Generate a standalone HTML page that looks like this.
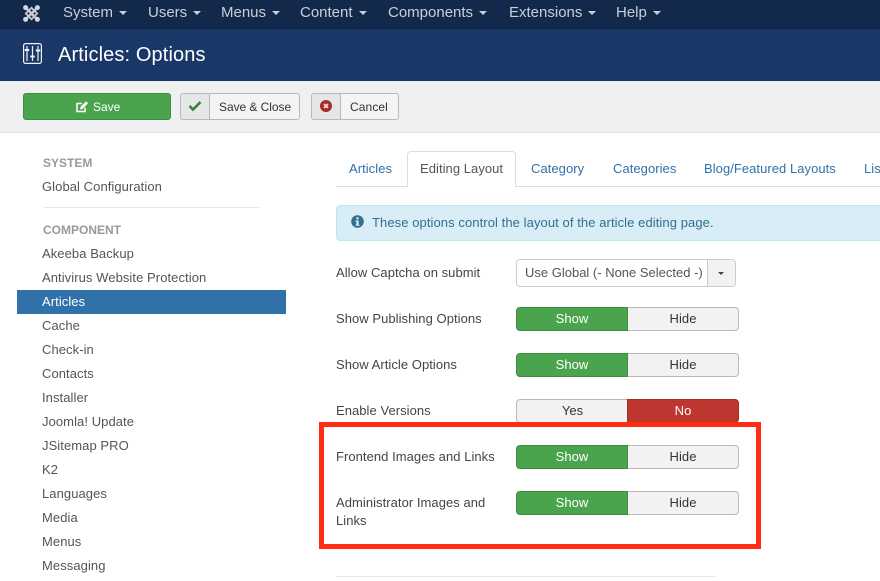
<!DOCTYPE html>
<html><head><meta charset="utf-8"><style>
html,body{margin:0;padding:0;background:#fff}
#p{position:relative;width:880px;height:581px;overflow:hidden;font-family:"Liberation Sans",sans-serif;font-size:13px;color:#555;background:#fff;letter-spacing:.05px}
#p div,#p span.a{position:absolute;white-space:nowrap;box-sizing:border-box}
.n{top:4px;font-size:15px;line-height:18px;color:#c9ced7;letter-spacing:0}
.n i{display:inline-block;width:0;height:0;border:4px solid transparent;border-top-color:#c9ced7;border-bottom:0;margin-left:6px;vertical-align:2px}
.s{left:42px;line-height:18px;color:#555;letter-spacing:.07px}
.h{left:43px;line-height:18px;font-weight:bold;font-size:12px;color:#999;letter-spacing:0}
.t{top:160px;line-height:18px;color:#3071a9}
.l{left:336px;line-height:18px;color:#444}
.b{font-size:12px;line-height:18px;letter-spacing:0}
.g{left:516px;width:112px;height:24px;background:#4aa44d;border:1px solid #3f8c42;border-radius:4px 0 0 4px;color:#fff;text-align:center;line-height:22px}
.w{left:628px;width:111px;height:24px;background:#f2f2f2;border:1px solid #b9b9b9;border-left:0;border-radius:0 4px 4px 0;color:#333;text-align:center;line-height:22px}
</style></head><body><div id="p">
<div style="left:0;top:0;width:880px;height:29px;background:#13294b"></div>
<div style="left:0;top:28px;width:880px;height:1px;background:#0f2240"></div>
<svg style="position:absolute;left:23px;top:5px" width="17" height="17" viewBox="0 0 17 17"><g stroke="#c4c9d1" fill="none"><path d="M3 3L14 14M14 3L3 14" stroke-width="2.600"/><path d="M8.500 2.800L14.200 8.500L8.500 14.200L2.800 8.500Z" stroke-width="1.800"/></g><g fill="#d2d6dc"><circle cx="2.600" cy="2.600" r="2.500"/><circle cx="14.400" cy="2.600" r="2.500"/><circle cx="2.600" cy="14.400" r="2.500"/><circle cx="14.400" cy="14.400" r="2.500"/></g></svg>
<div class="n" style="left:63px">System<i></i></div>
<div class="n" style="left:148px">Users<i></i></div>
<div class="n" style="left:221px">Menus<i></i></div>
<div class="n" style="left:300px">Content<i></i></div>
<div class="n" style="left:388px">Components<i></i></div>
<div class="n" style="left:509px">Extensions<i></i></div>
<div class="n" style="left:616px">Help<i></i></div>

<div style="left:0;top:29px;width:880px;height:52px;background:#1a3867"></div>
<svg style="position:absolute;left:23px;top:43px" width="19" height="21" viewBox="0 0 19 21"><rect x=".6" y=".6" width="17.800" height="19.800" rx="2" fill="none" stroke="#f0f2f5" stroke-width="1.200"/><path d="M4 3V18M9.500 3V18M15 3V18" stroke="#f0f2f5" stroke-width="1.200" fill="none"/><g fill="#f0f2f5"><rect x="1.800" y="6" width="4.400" height="2"/><rect x="7.300" y="12.500" width="4.400" height="2"/><rect x="12.800" y="6.500" width="4.400" height="2"/></g></svg>
<div style="left:58px;top:43px;font-size:20px;line-height:24px;color:#fff;letter-spacing:.12px">Articles: Options</div>

<div style="left:0;top:81px;width:880px;height:52px;background:#f0f0f0;border-bottom:1px solid #dedede"></div>
<div style="left:23px;top:93px;width:148px;height:27px;background:#4aa44d;border:1px solid #3f8c42;border-radius:3px"></div>
<svg style="position:absolute;left:75px;top:100px" width="14" height="14" viewBox="0 0 14 14"><path d="M10 7.500V11.500H2V3.500H7" fill="none" stroke="#fff" stroke-width="1.500"/><path d="M5 9.500L5.600 6.800L11 1.400L13 3.400L7.600 8.900Z" fill="#fff"/></svg>
<div class="b" style="left:93px;top:98px;color:#fff">Save</div>

<div style="left:180px;top:93px;width:120px;height:27px;background:#f4f4f4;border:1px solid #b9b9b9;border-radius:3px"></div>
<div style="left:181px;top:94px;width:29px;height:25px;background:#e6e6e6;border-right:1px solid #b9b9b9;border-radius:3px 0 0 3px"></div>
<svg style="position:absolute;left:188px;top:100px" width="14" height="12" viewBox="0 0 14 12"><path d="M1.500 6L5 9.500L12.500 2" fill="none" stroke="#378137" stroke-width="2.600"/></svg>
<div class="b" style="left:219px;top:98px;color:#333;letter-spacing:-.05px">Save &amp; Close</div>

<div style="left:311px;top:93px;width:88px;height:27px;background:#f4f4f4;border:1px solid #b9b9b9;border-radius:3px"></div>
<div style="left:312px;top:94px;width:29px;height:25px;background:#e6e6e6;border-right:1px solid #b9b9b9;border-radius:3px 0 0 3px"></div>
<svg style="position:absolute;left:320px;top:100px" width="12" height="12" viewBox="0 0 12 12"><circle cx="6" cy="6" r="6" fill="#a82a2a"/><path d="M4 4L8 8M8 4L4 8" stroke="#f2dede" stroke-width="1.800"/></svg>
<div class="b" style="left:350px;top:98px;color:#333;letter-spacing:.1px">Cancel</div>

<div class="h" style="top:154px">SYSTEM</div>
<div class="s" style="top:178px">Global Configuration</div>
<div style="left:44px;top:207px;width:215px;height:1px;background:#e5e5e5"></div>
<div class="h" style="top:221px">COMPONENT</div>
<div class="s" style="top:245px">Akeeba Backup</div>
<div class="s" style="top:269px">Antivirus Website Protection</div>
<div style="left:17px;top:290px;width:269px;height:24px;background:#3071a9"></div>
<div class="s" style="top:293px;color:#fff">Articles</div>
<div class="s" style="top:317px">Cache</div>
<div class="s" style="top:341px">Check-in</div>
<div class="s" style="top:365px">Contacts</div>
<div class="s" style="top:389px">Installer</div>
<div class="s" style="top:413px">Joomla! Update</div>
<div class="s" style="top:437px">JSitemap PRO</div>
<div class="s" style="top:461px">K2</div>
<div class="s" style="top:485px">Languages</div>
<div class="s" style="top:509px">Media</div>
<div class="s" style="top:533px">Menus</div>
<div class="s" style="top:557px">Messaging</div>

<div style="left:336px;top:186px;width:544px;height:1px;background:#ddd"></div>
<div class="t" style="left:349px">Articles</div>
<div style="left:407px;top:151px;width:109px;height:36px;background:#fff;border:1px solid #ddd;border-bottom:0;border-radius:4px 4px 0 0"></div>
<div class="t" style="left:420px;color:#555">Editing Layout</div>
<div class="t" style="left:531px">Category</div>
<div class="t" style="left:613px">Categories</div>
<div class="t" style="left:704px">Blog/Featured Layouts</div>
<div class="t" style="left:864px">Lis</div>

<div style="left:336px;top:205px;width:560px;height:36px;background:#d9edf7;border:1px solid #bce8f1;border-radius:4px"></div>
<svg style="position:absolute;left:351px;top:215px" width="13" height="13" viewBox="0 0 13 13"><circle cx="6.500" cy="6.500" r="6.300" fill="#31708f"/><rect x="5.400" y="2.300" width="2.200" height="2" fill="#d9edf7"/><path d="M4.600 5.400H7.600V9.600H8.500V10.800H4.600V9.600H5.400V6.600H4.600Z" fill="#d9edf7"/></svg>
<div style="left:372px;top:214px;line-height:18px;color:#31708f;letter-spacing:.08px">These options control the layout of the article editing page.</div>

<div class="l" style="top:264px">Allow Captcha on submit</div>
<div style="left:516px;top:259px;width:220px;height:28px;background:#fff;border:1px solid #ccc;border-radius:4px"></div>
<div style="left:707px;top:260px;width:28px;height:26px;background:#f2f2f2;border-left:1px solid #ccc;border-radius:0 3px 3px 0"></div>
<div style="left:718px;top:272px;width:0;height:0;border:3.500px solid transparent;border-top-color:#444;border-bottom:0"></div>
<div style="left:525px;top:264px;line-height:18px;color:#555;letter-spacing:0">Use Global (- None Selected -)</div>

<div class="l" style="top:310px">Show Publishing Options</div>
<div class="g" style="top:307px">Show</div><div class="w" style="top:307px">Hide</div>
<div class="l" style="top:356px">Show Article Options</div>
<div class="g" style="top:353px">Show</div><div class="w" style="top:353px">Hide</div>
<div class="l" style="top:402px">Enable Versions</div>
<div class="w" style="top:399px;left:516px;width:112px;border:1px solid #b9b9b9;border-right:0;border-radius:4px 0 0 4px">Yes</div>
<div class="g" style="top:399px;left:627px;background:#bd362f;border-color:#a52d27;border-radius:0 4px 4px 0">No</div>
<div class="l" style="top:448px">Frontend Images and Links</div>
<div class="g" style="top:445px">Show</div><div class="w" style="top:445px">Hide</div>
<div class="l" style="top:494px">Administrator Images and</div>
<div class="l" style="top:512px">Links</div>
<div class="g" style="top:491px">Show</div><div class="w" style="top:491px">Hide</div>

<div style="left:319px;top:422px;width:442px;height:127px;border:5px solid #ff2d16"></div>
<div style="left:336px;top:576px;width:380px;height:1px;background:#e8e8e8"></div>
</div></body></html>
